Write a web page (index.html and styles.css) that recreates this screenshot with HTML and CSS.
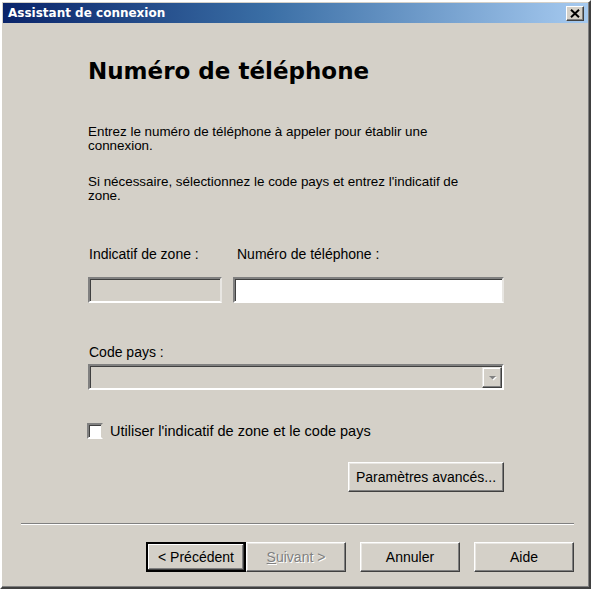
FILE: index.html
```html
<!DOCTYPE html>
<html lang="fr">
<head>
<meta charset="utf-8">
<title>Assistant de connexion</title>
<link rel="stylesheet" href="styles.css">
</head>
<body>
<div class="window">
  <div class="titlebar">
    <span class="title">Assistant de connexion</span>
    <span class="close-btn">
      <svg width="10" height="9" viewBox="0 0 10 9"><path d="M1 0.8 L9 8.2 M9 0.8 L1 8.2" stroke="#000" stroke-width="2" fill="none"/></svg>
    </span>
  </div>
  <div class="dialog">
    <div class="content">
      <h1 class="heading">Numéro de téléphone</h1>
      <p class="para first">Entrez le numéro de téléphone à appeler pour établir une<br>connexion.</p>
      <p class="para second">Si nécessaire, sélectionnez le code pays et entrez l'indicatif de<br>zone.</p>
      <div class="phone-grid">
        <span class="label">Indicatif de zone :</span>
        <span class="label label-phone">Numéro de téléphone :</span>
        <span class="field field-disabled"></span>
        <span class="field field-white"></span>
      </div>
      <span class="label label-country">Code pays :</span>
      <div class="combo">
        <span class="combo-btn">
          <svg width="9" height="6" viewBox="0 0 9 6"><path d="M2 2 H9 L5.5 5.5 Z" fill="#fff"/><path d="M1 1 H8 L4.5 4.5 Z" fill="#808080"/></svg>
        </span>
      </div>
      <div class="check-row">
        <span class="checkbox"></span>
        <span class="check-text">Utiliser l'indicatif de zone et le code pays</span>
      </div>
      <div class="adv-row">
        <span class="btn btn-adv">Paramètres avancés...</span>
      </div>
    </div>
    <div class="separator"></div>
    <div class="buttons">
      <span class="btn btn-default">&lt; Précédent</span>
      <span class="btn btn-disabled"><u>S</u>uivant &gt;</span>
      <span class="btn btn-cancel">Annuler</span>
      <span class="btn btn-help">Aide</span>
    </div>
  </div>
</div>
</body>
</html>
```
FILE: styles.css
```css
* { box-sizing: border-box; }
html, body { margin: 0; padding: 0; }
body {
  background: #ffffff;
  font-family: "Liberation Sans", Arial, sans-serif;
  font-size: 14px;
  color: #000;
}
.window {
  width: 591px;
  height: 589px;
  background: #d4d0c8;
  border: 2px solid;
  border-color: #ffffff #404040 #404040 #ffffff;
  box-shadow: inset -1px -1px 0 #808080;
  padding: 1px 1px 0 1px;
  display: flex;
  flex-direction: column;
}
.titlebar {
  height: 20px;
  background: linear-gradient(to right, #0a246a 0%, #3a6ea5 45%, #a6caf0 100%);
  display: flex;
  align-items: center;
  justify-content: space-between;
  padding: 0 4px 0 5px;
}
.title {
  font-family: "DejaVu Sans", Tahoma, sans-serif;
  font-weight: bold;
  font-size: 12px;
  color: #fff;
  line-height: 15px;
}
.close-btn {
  width: 18px;
  height: 15px;
  background: #d4d0c8;
  border: 1px solid;
  border-color: #ffffff #404040 #404040 #ffffff;
  box-shadow: inset -1px -1px 0 #808080;
  display: flex;
  align-items: center;
  justify-content: center;
}
.close-btn svg { display: block; }
.dialog {
  display: flex;
  flex-direction: column;
}
.content {
  padding-left: 85px;
  width: 501px;
  display: flex;
  flex-direction: column;
  align-items: flex-start;
}
.heading {
  margin: 35px 0 0 0;
  font-family: "DejaVu Sans", Verdana, sans-serif;
  font-weight: bold;
  font-size: 23px;
  line-height: 27px;
}
.para {
  margin: 0;
  font-size: 13.4px;
  line-height: 14px;
}
.para.first { margin-top: 40px; }
.para.second { margin-top: 22px; }
.phone-grid {
  margin-top: 42px;
  display: grid;
  grid-template-columns: 134px 271px;
  column-gap: 11px;
  row-gap: 14px;
  width: 416px;
}
.label {
  line-height: 18px;
  padding-left: 1px;
}
.label-phone { padding-left: 4px; }
.label-country { margin-top: 40px; }
.field {
  height: 26px;
  border: 2px solid;
  border-color: #808080 #e8e6e2 #ffffff #808080;
  box-shadow: inset 1px 1px 0 #404040;
}
.field-disabled { background: #d4d0c8; }
.field-white { background: #ffffff; }
.combo {
  margin-top: 3px;
  width: 416px;
  height: 26px;
  background: #d4d0c8;
  border: 2px solid;
  border-color: #808080 #ffffff #ffffff #808080;
  box-shadow: inset 1px 1px 0 #404040;
  display: flex;
  justify-content: flex-end;
  align-items: stretch;
  padding: 1px 0 0 1px;
}
.combo-btn {
  width: 20px;
  background: #d4d0c8;
  border: 1px solid;
  border-color: #e8e6e2 #404040 #404040 #e8e6e2;
  box-shadow: inset -1px -1px 0 #808080, inset 1px 1px 0 #ffffff;
  display: flex;
  align-items: center;
  justify-content: center;
}
.check-row {
  margin-top: 33px;
  display: flex;
  align-items: center;
  height: 16px;
  margin-left: -1px;
}
.checkbox {
  width: 16px;
  height: 16px;
  background: #fff;
  border: 2px solid;
  border-color: #808080 #d4d0c8 #ffffff #808080;
  box-shadow: inset 1px 1px 0 #404040;
}
.check-text {
  margin-left: 7px;
  line-height: 18px;
  font-size: 14.5px;
}
.adv-row {
  margin-top: 23px;
  width: 416px;
  display: flex;
  justify-content: flex-end;
}
.btn {
  height: 30px;
  background: #d4d0c8;
  border: 1px solid;
  border-color: #ffffff #404040 #404040 #ffffff;
  box-shadow: inset -1px -1px 0 #808080, inset 1px 1px 0 #e8e6e2;
  display: flex;
  align-items: center;
  justify-content: center;
  line-height: 18px;
  white-space: nowrap;
}
.btn-adv { width: 156px; }
.separator {
  margin: 31px 0 0 18px;
  width: 553px;
  height: 2px;
  border-top: 1px solid #808080;
  border-bottom: 1px solid #ffffff;
}
.buttons {
  margin-top: 17px;
  display: flex;
  justify-content: flex-end;
  padding-right: 14px;
}
.buttons .btn { width: 100px; }
.btn-default {
  border: 2px solid #000;
  box-shadow: inset -1px -1px 0 #404040, inset 1px 1px 0 #ffffff, inset -2px -2px 0 #808080;
}
.btn-disabled {
  color: #808080;
  text-shadow: 1px 1px 0 #ffffff;
}
.btn-disabled u { text-decoration-color: #808080; }
.btn-cancel { margin-left: 14px; }
.btn-help { margin-left: 14px; }
```
